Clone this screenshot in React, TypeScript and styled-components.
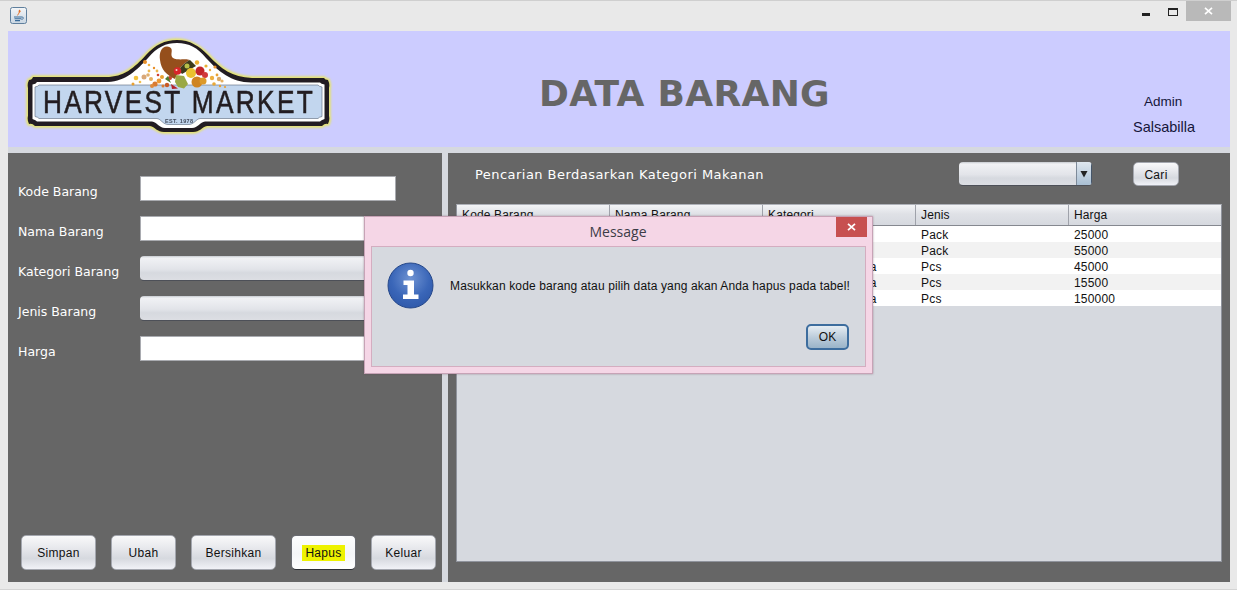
import React from "react";
import styled, { createGlobalStyle } from "styled-components";

const Global = createGlobalStyle`
  html, body { margin: 0; padding: 0; background: #e9e9e9; }
  * { box-sizing: border-box; }
`;

const sans = `"Liberation Sans", Arial, sans-serif`;
const verdana = `"DejaVu Sans", Verdana, sans-serif`;

const Window = styled.div`
  position: relative;
  width: 1237px;
  height: 590px;
  overflow: hidden;
  background: #e9e9e9;
  border-top: 1px solid #cfcfcf;
  border-bottom: 1px solid #d4d4d4;
  display: flex;
  flex-direction: column;
  font-family: ${sans};
`;

const TitleBar = styled.div`
  height: 30px;
  flex: none;
  display: flex;
  align-items: flex-start;
  padding: 6px 6px 0 10px;
`;

const AppIcon = styled.svg`
  width: 17px;
  height: 17px;
  display: block;
`;

const Controls = styled.div`
  margin-left: auto;
  margin-top: -6px;
  display: flex;
  align-items: flex-start;
`;

const MinButton = styled.div`
  width: 8px;
  height: 3px;
  background: #222;
  margin: 12px 18px 0 0;
`;

const MaxButton = styled.div`
  width: 10px;
  height: 8px;
  border: 1px solid #222;
  border-top-width: 2px;
  margin: 7px 8px 0 0;
`;

const CloseButton = styled.div<{ $bg: string; $w: number }>`
  width: ${(p) => p.$w}px;
  height: 20px;
  background: ${(p) => p.$bg};
  display: flex;
  align-items: center;
  justify-content: center;
`;

const Content = styled.div`
  width: 1222px;
  height: 551px;
  margin-left: 8px;
  background: #d6d9df;
  display: flex;
  flex-direction: column;
`;

const Header = styled.header`
  height: 116px;
  flex: none;
  background: #ccccff;
  display: flex;
  align-items: flex-start;
`;

const LogoSvg = styled.svg`
  width: 312px;
  height: 100px;
  margin: 5px 0 0 16px;
  flex: none;
  display: block;
`;

const Title = styled.h1`
  margin: 38px 0 0 203px;
  font: bold 36px/50px ${verdana};
  color: #666666;
  letter-spacing: 0.3px;
  white-space: nowrap;
`;

const UserBox = styled.div`
  margin: 61px 0 0 auto;
  width: 97px;
  flex: none;
  color: #16163a;
  font-size: 13.5px;
`;

const UserRole = styled.div`
  height: 20px;
  line-height: 20px;
  padding-left: 11px;
`;

const UserName = styled.div`
  height: 20px;
  margin-top: 5px;
  line-height: 20px;
  font-size: 14.5px;
`;

const Panels = styled.div`
  margin-top: 6px;
  height: 429px;
  display: flex;
  gap: 6px;
`;

const LeftPanel = styled.section`
  width: 434px;
  flex: none;
  background: #666666;
  display: flex;
  flex-direction: column;
  padding: 23px 0 12px 10px;
`;

const FormRow = styled.div`
  display: flex;
  align-items: center;
  height: 25px;
  margin-bottom: 15px;
`;

const Label = styled.label`
  width: 122px;
  flex: none;
  color: #ffffff;
  font: 12.5px/18px ${verdana};
  padding-top: 7px;
`;

const TextBox = styled.div`
  width: 256px;
  height: 25px;
  background: #fff;
  border: 1px solid #a9abb0;
`;

const Combo = styled.div<{ $w: number }>`
  width: ${(p) => p.$w}px;
  height: 25px;
  border-radius: 4px;
  background: linear-gradient(#c6c9cf 0, #f1f2f5 2px, #e2e4e9 55%, #d6d9df 70%, #dcdee3 100%);
  border-bottom: 1px solid #4d5058;
  display: flex;
  justify-content: flex-end;
  overflow: hidden;
`;

const ComboArrow = styled.div`
  width: 16px;
  height: 100%;
  background: linear-gradient(#dfe7ef, #a9bfd3);
  border-left: 1px solid #7d8a99;
  border-right: 1px solid #46566a;
  display: flex;
  align-items: center;
  justify-content: center;
  color: #222;
`;

const ButtonRow = styled.div`
  margin-top: auto;
  display: flex;
  gap: 15px;
  padding-left: 3px;
`;

const ActionButton = styled.button<{ $w: number; $focus?: boolean; $h?: number }>`
  width: ${(p) => p.$w}px;
  height: ${(p) => p.$h ?? 35}px;
  padding: 1px 0 0;
  flex: none;
  border: 1px solid ${(p) => (p.$focus ? "#6a6c73" : "#a4a7af")};
  border-bottom-color: ${(p) => (p.$focus ? "#2c2e35" : "#a4a7af")};
  border-radius: 5px;
  background: ${(p) =>
    p.$focus
      ? "linear-gradient(#fdfdfe, #f4f5f7 55%, #ffffff)"
      : "linear-gradient(#f9f9fa 0, #e8e9ed 35%, #d6d9df 68%, #f1f2f7 100%)"};
  font: 12px ${sans};
  letter-spacing: 0.3px;
  color: #111;
  display: flex;
  align-items: center;
  justify-content: center;
`;

const Highlight = styled.span`
  background: #eef200;
  padding: 2px 3px 2px 3px;
  line-height: 12px;
`;

const RightPanel = styled.section`
  flex: 1;
  background: #666666;
  padding: 9px 8px 20px 8px;
  display: flex;
  flex-direction: column;
`;

const SearchBar = styled.div`
  height: 24px;
  flex: none;
  display: flex;
  align-items: center;
  margin-bottom: 18px;
  padding-left: 19px;
`;

const SearchLabel = styled.span`
  width: 484px;
  flex: none;
  color: #fff;
  font: 13px ${verdana};
  letter-spacing: 0.46px;
  white-space: nowrap;
`;

const SearchCombo = styled(Combo)`
  height: 24px;
  margin-right: 41px;
`;

const TableBox = styled.div`
  flex: 1;
  border: 1px solid #8f939c;
  border-top-color: #aeb1b8;
  background: #d6d9df;
  overflow: hidden;
`;

const HeaderRow = styled.div`
  display: grid;
  grid-template-columns: 153px 153px 153px 153px 1fr;
  height: 21px;
  border-bottom: 1px solid #85888f;
  background: linear-gradient(#f3f4f6, #dfe1e6 45%, #d6d9df);
`;

const HeaderCell = styled.div`
  font-size: 12px;
  letter-spacing: 0.13px;
  line-height: 20px;
  padding-left: 5px;
  color: #111;
  border-right: 1px solid #9fa2aa;
  &:last-child { border-right: 0; }
`;

const Row = styled.div<{ $alt: boolean }>`
  display: grid;
  grid-template-columns: 153px 153px 153px 153px 1fr;
  height: 16px;
  background: ${(p) => (p.$alt ? "#f2f2f2" : "#ffffff")};
`;

const Cell = styled.div`
  font-size: 12px;
  letter-spacing: 0.2px;
  line-height: 18px;
  padding-left: 5px;
  color: #111;
  white-space: nowrap;
  overflow: hidden;
`;

const Dialog = styled.div`
  position: absolute;
  left: 364px;
  top: 215px;
  width: 509px;
  height: 158px;
  background: #f5d6e6;
  border: 1px solid #c7a3b6;
  box-shadow: 0 0 2px rgba(90, 60, 75, 0.45);
  display: flex;
  flex-direction: column;
  padding: 0 6px 6px 6px;
`;

const DialogHead = styled.div`
  height: 29px;
  flex: none;
  position: relative;
  text-align: center;
  font: 14px/30px "Open Sans", "Noto Sans", sans-serif;
  color: #3c3c46;
  padding-right: 1px;
`;

const DialogClose = styled.div`
  position: absolute;
  top: 0;
  right: -1px;
  width: 31px;
  height: 20px;
  background: #c75050;
  display: flex;
  align-items: center;
  justify-content: center;
`;

const DialogBody = styled.div`
  flex: 1;
  background: #d6d9df;
  border: 1px solid #d4adc0;
  display: flex;
  flex-direction: column;
  padding: 15px 16px 16px 15px;
`;

const MessageLine = styled.div`
  display: flex;
  align-items: center;
  gap: 16px;
`;

const InfoIcon = styled.svg`
  width: 47px;
  height: 47px;
  flex: none;
  display: block;
`;

const MessageText = styled.p`
  margin: 0;
  font: 12px ${sans};
  letter-spacing: 0.13px;
  color: #111;
  white-space: nowrap;
`;

const DialogActions = styled.div`
  margin-top: auto;
  display: flex;
  justify-content: flex-end;
`;

const OkButton = styled.button`
  width: 43px;
  height: 26px;
  padding: 0;
  border: 2px solid #3d6d9e;
  border-radius: 5px;
  background: linear-gradient(#e6edf3, #b9cad9 55%, #9ab4c9);
  font: 12px ${sans};
  color: #111;
`;

const XIcon = ({ color = "#fff" }: { color?: string }) => (
  <svg width="9" height="8" viewBox="0 0 9 8">
    <path d="M1 0.8 L8 7.2 M8 0.8 L1 7.2" stroke={color} strokeWidth="1.7" />
  </svg>
);

const OUTER =
  "M33 77 H106 C124 77 134 68 146 55 C155 45 165 40 177 40 C190 40 199 46 208 55 C221 69 232 77 252 78 H324 Q325 80 328 80 Q330 84 329 88 V116 Q330 120 328 124 Q325 123 322 126 H207 C202 127 200 132 193 132 H164 C157 132 155 127 150 126 H35 Q32 123 29 124 Q27 120 28 116 V88 Q27 84 29 80 Q32 80 33 77 Z";

const Logo = () => {
  const dots: [number, number, number, string][] = [
    [145, 62, 2, "#e8902a"], [149, 65, 1.3, "#f0b040"], [154, 68, 1.2, "#e8902a"], [157, 71, 1.4, "#eeb850"],
    [136, 78, 2.3, "#f2c23c"], [133, 84, 1.5, "#e8a030"], [140, 82, 1.3, "#f0c050"],
    [144, 77, 2.5, "#d9a878"], [148, 75, 1.8, "#dfb070"], [151, 79, 2, "#e6b060"], [149, 71, 1.4, "#eeb850"],
    [155, 84, 2.6, "#d97a30"], [152, 86, 2, "#e08a3a"], [159, 81, 2.4, "#ee9a34"], [162, 77, 2, "#e8a030"],
    [167, 85, 2.2, "#c95a28"], [163, 86, 1.5, "#d97a30"], [158, 75, 1.3, "#d04030"],
    [215, 67, 1.6, "#e89030"], [210, 70, 1.2, "#eeb040"], [217, 75, 1.4, "#e8a030"], [212, 78, 2.2, "#eeb040"],
    [219, 79, 2.2, "#d9a868"], [222, 81, 1.6, "#e6b060"], [214, 84, 1.8, "#e8a838"], [220, 86, 1.2, "#e8a030"],
    [225, 87, 1.1, "#e8a030"], [206, 66, 1.6, "#e8b030"], [170, 78, 2, "#c9402a"],
  ];
  return (
    <LogoSvg viewBox="24 36 312 100" role="img" aria-label="Harvest Market">
      <defs>
        <filter id="glow" x="-5%" y="-10%" width="110%" height="120%"><feGaussianBlur stdDeviation="1.300" /></filter>
        <filter id="soft" x="-5%" y="-10%" width="110%" height="120%"><feGaussianBlur stdDeviation="0.400" /></filter>
      </defs>
      <path d={OUTER} fill="#e6e46a" stroke="#e6e46a" strokeWidth="3.500" filter="url(#glow)" />
      <g filter="url(#soft)">
        <path d={OUTER} fill="#231f20" />
        <path d="M37 82 H108 C126 81 137 70 148 58 C157 47 166 43 177 43 C189 43 198 48 206 58 C219 72 231 82 251 82.500 H320 Q321 84 324.500 84.500 V119 Q321 120 320 121.500 H205 C200 122 198 128 192 128 H165 C159 128 157 122 152 121.500 H37 Q36 120 32.500 119 V84.500 Q36 84 37 82 Z"
          fill="#ffffff" />
        <path d="M39 85 H318 Q319 86.500 322 87 V116.500 Q319 117 318 118.500 H200 C196 119 194 124.500 189 124.500 H168 C163 124.500 161 119 157 118.500 H39 Q38 117 35 116.500 V87 Q38 86.500 39 85 Z"
          fill="#c2d6ee" stroke="#59667a" strokeWidth="0.6" />
        {dots.map(([cx, cy, r, fill]) => (
          <circle key={`${cx}-${cy}`} cx={cx} cy={cy} r={r} fill={fill} />
        ))}
        <path d="M167 46.500 C161 46.500 159 53 160 60 C161 69 166 75 175 79 L179 70 C181 66 186 62 190 60 C184 58.500 177 60.500 173 58 C170 55 172.500 52 171.500 49 C171 47.500 169 46.500 167 46.500 Z" fill="#95501f" />
        <path d="M179 70 C181 66 186 62 190 60 L196 66 L182 74 Z" fill="#3e3a1c" />
        <circle cx="197" cy="62.500" r="2.200" fill="#eeb030" />
        <circle cx="191" cy="73" r="5" fill="#eac22e" />
        <circle cx="187" cy="66" r="2.500" fill="#b8c04a" />
        <circle cx="200" cy="71" r="4.500" fill="#c3262b" />
        <circle cx="205" cy="75" r="3" fill="#d2393a" />
        <circle cx="177.500" cy="71" r="3.800" fill="#d8262c" />
        <circle cx="176.500" cy="70" r="1" fill="#f6d7c8" />
        <circle cx="197" cy="82" r="5.500" fill="#cf8420" />
        <circle cx="203" cy="81" r="3.500" fill="#dc9a2a" />
        <path d="M176 75 L184 76 L188 84 L184 88.500 L178 87 L175 82 Z" fill="#9aa945" />
        <path d="M171 84 L178 88.500 L172 89 Z" fill="#b5232a" />
        <path d="M165 79 L171 83 L168 76 Z" fill="#4f7a30" />
        <g transform="scale(0.82 1)">
          <text x="52.440" y="113.500" fontFamily={sans} fontSize="32" fill="#231f20" stroke="#231f20" strokeWidth="0.6" textLength="329" lengthAdjust="spacing">HARVEST MARKET</text>
        </g>
        <text x="165" y="122.500" fontFamily={sans} fontSize="5.500" fontWeight="700" fill="#444c5c" textLength="28">EST. 1978</text>
      </g>
    </LogoSvg>
  );
};

const leftButtons = [
  { label: "Simpan", w: 75 },
  { label: "Ubah", w: 65 },
  { label: "Bersihkan", w: 85 },
  { label: "Hapus", w: 65, focus: true },
  { label: "Keluar", w: 65 },
];

const columns = ["Kode Barang", "Nama Barang", "Kategori", "Jenis", "Harga"];
const rows = [
  ["", "", "", "Pack", "25000"],
  ["", "", "", "Pack", "55000"],
  ["", "", "Alat Rumah Tangga", "Pcs", "45000"],
  ["", "", "Alat Rumah Tangga", "Pcs", "15500"],
  ["", "", "Alat Rumah Tangga", "Pcs", "150000"],
];

export default function App() {
  return (
    <Window>
      <Global />
      <TitleBar>
        <AppIcon viewBox="0 0 17 17">
          <defs>
            <linearGradient id="ib" x1="0" y1="0" x2="0" y2="1">
              <stop offset="0" stopColor="#f4f6f8" />
              <stop offset="1" stopColor="#c9d6e2" />
            </linearGradient>
          </defs>
          <rect x="0.500" y="0.500" width="16" height="16" rx="2" fill="url(#ib)" stroke="#5f7f9d" />
          <path d="M9.500 2.500 C7.500 4.500 10 5 7.500 7.500 L7 9 C9.500 7.500 8.800 6 10.500 4.800 C11.500 4 10 3.500 9.500 2.500 Z" fill="#e2702a" />
          <path d="M4 10 H12 M4.500 11.800 H11.500 M5 13.600 H10" stroke="#3b6c9a" strokeWidth="1.100" />
          <path d="M12 10 C14 10 14 12 11.500 12.500" stroke="#3b6c9a" strokeWidth="0.900" fill="none" />
        </AppIcon>
        <Controls>
          <MinButton />
          <MaxButton />
          <CloseButton $bg="#b9b9b9" $w={45}><XIcon /></CloseButton>
        </Controls>
      </TitleBar>
      <Content>
        <Header>
          <Logo />
          <Title>DATA BARANG</Title>
          <UserBox>
            <UserRole>Admin</UserRole>
            <UserName>Salsabilla</UserName>
          </UserBox>
        </Header>
        <Panels>
          <LeftPanel>
            <FormRow><Label>Kode Barang</Label><TextBox /></FormRow>
            <FormRow><Label>Nama Barang</Label><TextBox /></FormRow>
            <FormRow><Label>Kategori Barang</Label><Combo $w={256} /></FormRow>
            <FormRow><Label>Jenis Barang</Label><Combo $w={256} /></FormRow>
            <FormRow><Label>Harga</Label><TextBox /></FormRow>
            <ButtonRow>
              {leftButtons.map((b) => (
                <ActionButton key={b.label} $w={b.w} $focus={b.focus}>
                  {b.focus ? <Highlight>{b.label}</Highlight> : b.label}
                </ActionButton>
              ))}
            </ButtonRow>
          </LeftPanel>
          <RightPanel>
            <SearchBar>
              <SearchLabel>Pencarian Berdasarkan Kategori Makanan</SearchLabel>
              <SearchCombo $w={133}>
                <ComboArrow>
                  <svg width="8" height="8" viewBox="0 0 8 8"><path d="M0.500 1 H7.500 L4 7.500 Z" fill="#222" /></svg>
                </ComboArrow>
              </SearchCombo>
              <ActionButton $w={46} $h={24}>Cari</ActionButton>
            </SearchBar>
            <TableBox>
              <HeaderRow>
                {columns.map((c) => <HeaderCell key={c}>{c}</HeaderCell>)}
              </HeaderRow>
              {rows.map((r, i) => (
                <Row key={r[4]} $alt={i % 2 === 1}>
                  {r.map((c, j) => <Cell key={j}>{c}</Cell>)}
                </Row>
              ))}
            </TableBox>
          </RightPanel>
        </Panels>
      </Content>
      <Dialog>
        <DialogHead>
          Message
          <DialogClose><XIcon /></DialogClose>
        </DialogHead>
        <DialogBody>
          <MessageLine>
            <InfoIcon viewBox="0 0 47 47">
              <defs>
                <radialGradient id="ig" cx="0.5" cy="0.35" r="0.7">
                  <stop offset="0" stopColor="#6f93d2" />
                  <stop offset="0.6" stopColor="#3a66b8" />
                  <stop offset="1" stopColor="#2d57a8" />
                </radialGradient>
              </defs>
              <circle cx="23.500" cy="23.500" r="22.500" fill="url(#ig)" stroke="#26488a" />
              <circle cx="23.500" cy="11" r="3.200" fill="#fff" />
              <path d="M16.500 18.500 H27 V32.500 H31.500 V37 H16 V32.500 H20.500 V23 H16.500 Z" fill="#fff" />
            </InfoIcon>
            <MessageText>Masukkan kode barang atau pilih data yang akan Anda hapus pada tabel!</MessageText>
          </MessageLine>
          <DialogActions>
            <OkButton>OK</OkButton>
          </DialogActions>
        </DialogBody>
      </Dialog>
    </Window>
  );
}
